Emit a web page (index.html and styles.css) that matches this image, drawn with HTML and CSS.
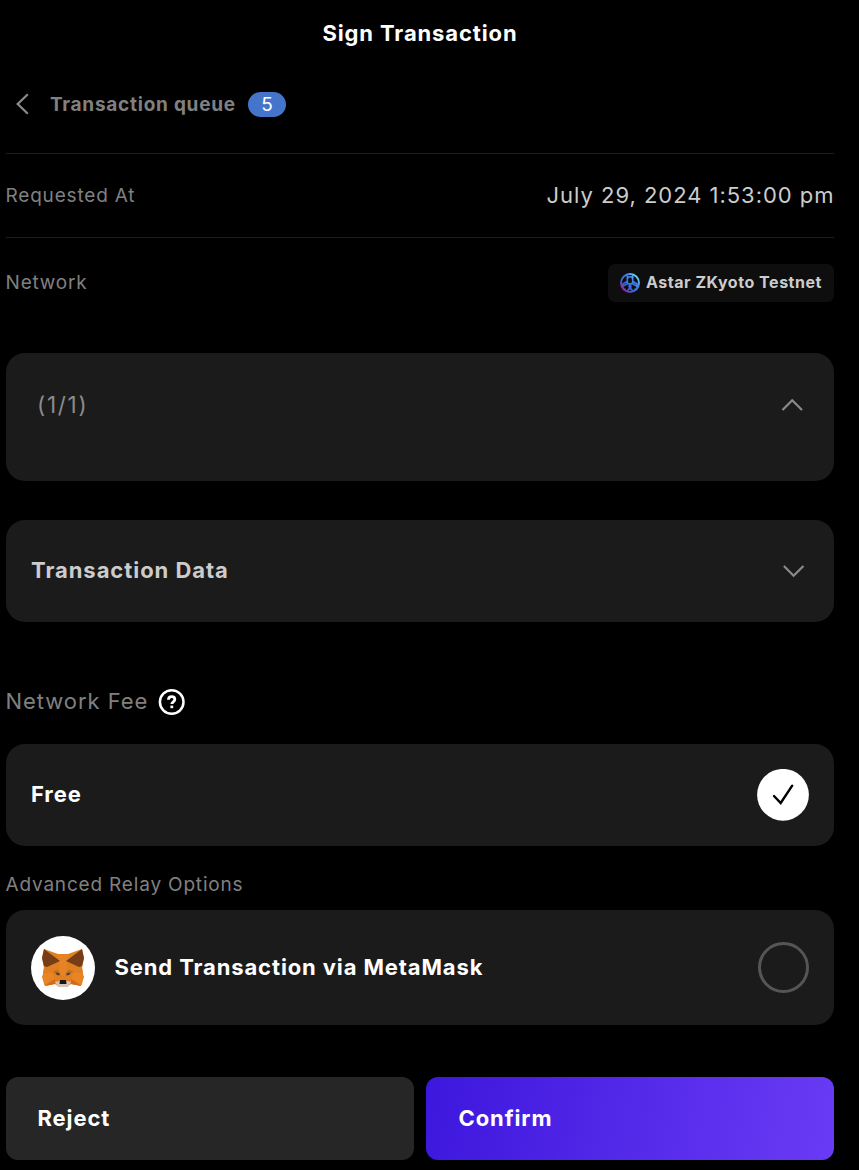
FILE: index.html
```html
<!DOCTYPE html>
<html lang="en">
<head>
<meta charset="utf-8">
<title>Sign Transaction</title>
<link rel="stylesheet" href="styles.css">
</head>
<body>
<main class="sheet">
  <h1 class="title"><span>Sign Transaction</span></h1>
  <nav class="queue">
    <svg class="back" width="14" height="22" viewBox="0 0 14 22"><path d="M12.8 1.2 2.7 11l10.1 9.8"/></svg>
    <span class="queue-label">Transaction queue</span>
    <span class="badge">5</span>
  </nav>
  <div class="row requested">
    <span class="label">Requested At</span>
    <span class="date">July 29, 2024 1:53:00 pm</span>
  </div>
  <div class="row network">
    <span class="label">Network</span>
    <span class="chip">
      <svg width="20" height="20" viewBox="0 0 20 20" fill="none">
        <defs><linearGradient id="ring" x1="2" y1="18" x2="17" y2="3" gradientUnits="userSpaceOnUse"><stop offset="0" stop-color="#b0108c"/><stop offset=".3" stop-color="#3864dc"/><stop offset=".75" stop-color="#4488ee"/><stop offset="1" stop-color="#70e0ff"/></linearGradient></defs>
        <g stroke="url(#ring)">
          <circle cx="10" cy="10" r="9" stroke-width="1.9"/>
          <path stroke-width="1.6" d="M7.3 2.2v6.3a2.7 2.7 0 0 0 5.4 0V2.2M7.3 6.4a2.7 2.7 0 0 1 5.4 0M2.2 13.8l5.4-3.2a2.6 2.6 0 0 1 2.5 4.3l-2.9 3M5.9 16.5A3.4 3.4 0 0 1 5 9.8l2.5-1.5M17.8 13.8l-5.4-3.2a2.6 2.6 0 0 0-2.5 4.3l2.9 3M14.1 16.5A3.4 3.4 0 0 0 15 9.8l-2.5-1.5"/>
        </g>
      </svg>
      <span>Astar ZKyoto Testnet</span>
    </span>
  </div>
  <section class="card calls">
    <span class="count">(1/1)</span>
    <svg class="chevron" width="22" height="14" viewBox="0 0 22 14"><path d="m1.5 12 9.7-9.8L21 12"/></svg>
  </section>
  <section class="card data">
    <span class="heading dim">Transaction Data</span>
    <svg class="chevron" width="22" height="14" viewBox="0 0 22 14"><path d="m1.9 2 9.7 9.8L21.4 2"/></svg>
  </section>
  <div class="fee">
    <span class="fee-label">Network Fee</span>
    <svg width="28" height="28" viewBox="0 0 28 28" fill="none" stroke="#fff"><circle cx="13.7" cy="14" r="11.8" stroke-width="2.5"/><path stroke-width="2.8" d="M10.4 11.8c.1-2 1.4-3.1 3.3-3.1 1.8 0 3.1 1.1 3.1 2.7 0 2.4-3 2.4-3 4.7"/><path stroke-width="2.6" d="M12.4 18.9h2.8"/></svg>
  </div>
  <section class="card free">
    <span class="heading">Free</span>
    <svg width="52" height="52" viewBox="0 0 52 52"><circle cx="26" cy="25.8" r="25.9" fill="#fff"/><path d="m17 27 6.7 7L35.2 16.7" fill="none" stroke="#000" stroke-width="2.4" stroke-linecap="round"/></svg>
  </section>
  <div class="label advanced">Advanced Relay Options</div>
  <section class="card relay">
    <svg class="fox" width="64" height="64" viewBox="0 0 64 64">
      <circle cx="32" cy="32" r="32" fill="#fff"/>
      <path fill="#e2801f" d="m13 13 14 5h10l14-5 2 9-2 10 1 6 1 3-3 9-10-2-4 3h-8l-4-3-10 2-3-9 1-3 1-6-2-10z"/>
      <path fill="#de7f22" d="m13 31 14-5 5 6 5-6 14 5 1 7-11-3-3 4H26l-3-4-11 3z"/>
      <path fill="#e58325" d="M27 18h10l-2 22h-6z"/>
      <path fill="#763d16" d="m13 13 16 12-13 6-3-1-2-8zm38 0L35 25l13 6 3-1 2-8z"/>
      <path fill="#d2691c" d="m21 36 5-2.5 4 4.5zm22 0-5-2.5-4 4.5zM14 50l10-8v6zm36 0-10-8v6z"/>
      <path fill="#e88424" d="m12 38 9-2 3 7-11 6zm40 0-9-2-3 7 11 6z"/>
      <path fill="#3b4450" d="m24 36.5 4 .5 1 2.5-3-.5zm16 0-4 .5-1 2.5 3-.5z"/>
      <path fill="#d7c1b3" d="m24 46 5-1h6l5 1-3 5H27z"/>
      <path fill="#161616" d="M29 44h6l.5 4h-7z"/>
    </svg>
    <span class="heading relay-name">Send Transaction via MetaMask</span>
    <span class="radio"></span>
  </section>
  <div class="actions">
    <button class="button reject">Reject</button>
    <button class="button confirm">Confirm</button>
  </div>
</main>
</body>
</html>
```
FILE: styles.css
```css
* { box-sizing: border-box; }
body {
  margin: 0;
  background: #000;
  color: #fff;
  font-family: Inter, "Liberation Sans", sans-serif;
}
svg { display: block; flex: none; }
.sheet { width: 834px; height: 1170px; padding-left: 6px; white-space: nowrap; }
.title {
  margin: 0;
  height: 66px;
  display: flex;
  align-items: center;
  justify-content: center;
  font-size: 22px;
  font-weight: 700;
  letter-spacing: 0.88px;
}
.queue { display: flex; align-items: center; width: 280px; height: 76px; padding-left: 9px; }
.back, .chevron { fill: none; stroke: #8b8b8b; stroke-width: 2.2; }
.queue-label { margin-left: 21px; color: #808080; font-size: 19px; font-weight: 700; letter-spacing: 0.75px; }
.badge {
  width: 38px;
  height: 25px;
  margin-left: auto;
  border-radius: 13px;
  background: #4475cb;
  font-size: 19px;
  line-height: 25px;
  text-align: center;
}
.row { display: flex; align-items: center; justify-content: space-between; }
.requested { height: 85px; margin-top: 11px; border: solid #1c1c1c; border-width: 1px 0; }
.label { margin-left: -0.5px; color: #808080; font-size: 19px; letter-spacing: 0.82px; }
.date { margin-right: -0.5px; padding-bottom: 1px; color: #ccc; font-size: 22px; letter-spacing: 0.97px; }
.network { height: 90px; }
.network .label { padding-bottom: 2px; }
.chip {
  display: flex;
  align-items: center;
  gap: 6px;
  width: 226px;
  height: 38px;
  padding-left: 12px;
  border-radius: 7px;
  background: #0e0e0e;
  color: #ccc;
  font-size: 16px;
  font-weight: 700;
  letter-spacing: 0.53px;
}
.chip span { padding-bottom: 2px; }
.card {
  display: flex;
  align-items: center;
  justify-content: space-between;
  padding: 0 25px;
  border-radius: 19px;
  background: #1b1b1b;
}
.heading { padding-bottom: 2px; font-size: 22px; font-weight: 700; letter-spacing: 0.88px; }
.dim { color: #ccc; letter-spacing: 0.95px; }
.calls { height: 128px; margin-top: 25px; padding: 0 31px 24px; }
.count { padding-bottom: 1px; color: #8b8b8b; font-size: 22.5px; letter-spacing: 1.7px; }
.data { height: 102px; margin-top: 39px; padding-right: 30px; }
.fee { display: flex; align-items: center; justify-content: space-between; width: 180px; height: 28px; margin-top: 66px; }
.fee-label { margin-left: -0.5px; padding-bottom: 2px; color: #808080; font-size: 22px; letter-spacing: 0.95px; }
.free { height: 102px; margin-top: 28px; }
.advanced { height: 24px; margin-top: 27px; line-height: 24px; }
.relay { height: 115px; margin-top: 13px; }
.relay-name { margin-left: 19.5px; }
.radio { width: 51px; height: 51px; margin-left: auto; border: 3px solid #555; border-radius: 50%; }
.actions { display: grid; grid-template-columns: 1fr 1fr; gap: 12px; margin-top: 52px; }
.button {
  height: 83px;
  padding: 0 32.5px 2px;
  border: 0;
  border-radius: 12px;
  background: #262626;
  color: #fff;
  font: 700 22px Inter, "Liberation Sans", sans-serif;
  letter-spacing: 0.9px;
  text-align: left;
}
.reject { padding-left: 31.5px; }
.confirm { background: linear-gradient(100deg, #3d17dd, #6a3bf5); }
```
